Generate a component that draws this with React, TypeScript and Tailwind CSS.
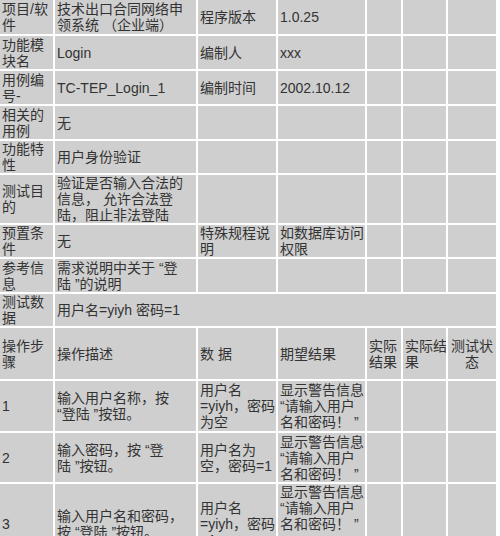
import React from "react";

type CellProps = {
  lines?: string[];
  span?: string;
  align?: string;
  valign?: string;
};

const Cell: React.FC<CellProps> = ({ lines = [], span = "", align = "text-left", valign = "items-center" }) => (
  <div className={`bg-[#cfcfcf] flex ${valign} px-[2px] overflow-hidden ${span}`}>
    <div className={`w-full ${align}`}>
      {lines.map((l, i) => (
        <div key={i} className="whitespace-nowrap">
          {l}
        </div>
      ))}
    </div>
  </div>
);

const App: React.FC = () => {
  const quoteExpect = ["显示警告信息", "“请输入用户", "名和密码！ ”"];

  return (
    <div
      className="w-[500px] h-[536px] overflow-hidden bg-white text-[14px] leading-[16px] text-[#333333]"
      style={{ fontFamily: '"Liberation Sans", "Noto Sans CJK SC", sans-serif' }}
    >
      <div className="grid w-[496px] grid-cols-[53px_141px_78px_87px_34px_43px_48px] grid-rows-[34px_33px_33px_33px_32px_48px_32px_33px_32px_51px_50px_49px_80px] gap-[2px]">
        {/* 基本信息 */}
        <Cell lines={["项目/软", "件"]} />
        <Cell lines={["技术出口合同网络申", "领系统 （企业端）"]} />
        <Cell lines={["程序版本"]} />
        <Cell lines={["1.0.25"]} />
        <Cell />
        <Cell />
        <Cell />

        <Cell lines={["功能模", "块名"]} />
        <Cell lines={["Login"]} />
        <Cell lines={["编制人"]} />
        <Cell lines={["xxx"]} />
        <Cell />
        <Cell />
        <Cell />

        <Cell lines={["用例编", "号-"]} />
        <Cell lines={["TC-TEP_Login_1"]} />
        <Cell lines={["编制时间"]} />
        <Cell lines={["2002.10.12"]} />
        <Cell />
        <Cell />
        <Cell />

        <Cell lines={["相关的", "用例"]} />
        <Cell lines={["无"]} />
        <Cell />
        <Cell />
        <Cell />
        <Cell />
        <Cell />

        <Cell lines={["功能特", "性"]} />
        <Cell lines={["用户身份验证"]} />
        <Cell />
        <Cell />
        <Cell />
        <Cell />
        <Cell />

        <Cell lines={["测试目", "的"]} />
        <Cell lines={["验证是否输入合法的", "信息， 允许合法登", "陆，阻止非法登陆"]} />
        <Cell />
        <Cell />
        <Cell />
        <Cell />
        <Cell />

        <Cell lines={["预置条", "件"]} />
        <Cell lines={["无"]} />
        <Cell lines={["特殊规程说", "明"]} />
        <Cell lines={["如数据库访问", "权限"]} />
        <Cell />
        <Cell />
        <Cell />

        <Cell lines={["参考信", "息"]} />
        <Cell lines={["需求说明中关于 “登", "陆 ”的说明"]} />
        <Cell />
        <Cell />
        <Cell />
        <Cell />
        <Cell />

        <Cell lines={["测试数", "据"]} />
        <Cell lines={["用户名=yiyh 密码=1"]} span="col-span-6" />

        {/* 操作步骤 */}
        <Cell lines={["操作步", "骤"]} />
        <Cell lines={["操作描述"]} />
        <Cell lines={["数 据"]} />
        <Cell lines={["期望结果"]} />
        <Cell lines={["实际", "结果"]} />
        <Cell lines={["实际结", "果"]} />
        <Cell lines={["测试状", "态"]} align="text-center" />

        <Cell lines={["1"]} />
        <Cell lines={["输入用户名称，按", "“登陆 ”按钮。"]} />
        <Cell lines={["用户名", "=yiyh，密码", "为空"]} />
        <Cell lines={quoteExpect} />
        <Cell />
        <Cell />
        <Cell />

        <Cell lines={["2"]} />
        <Cell lines={["输入密码，按 “登", "陆 ”按钮。"]} />
        <Cell lines={["用户名为", "空，密码=1"]} />
        <Cell lines={quoteExpect} />
        <Cell />
        <Cell />
        <Cell />

        <Cell lines={["3"]} />
        <Cell lines={["输入用户名和密码，", "按 “登陆 ”按钮。"]} />
        <Cell lines={["用户名", "=yiyh，密码", "=1"]} />
        <Cell lines={quoteExpect} valign="items-start" />
        <Cell />
        <Cell />
        <Cell />
      </div>
    </div>
  );
};

export default App;
